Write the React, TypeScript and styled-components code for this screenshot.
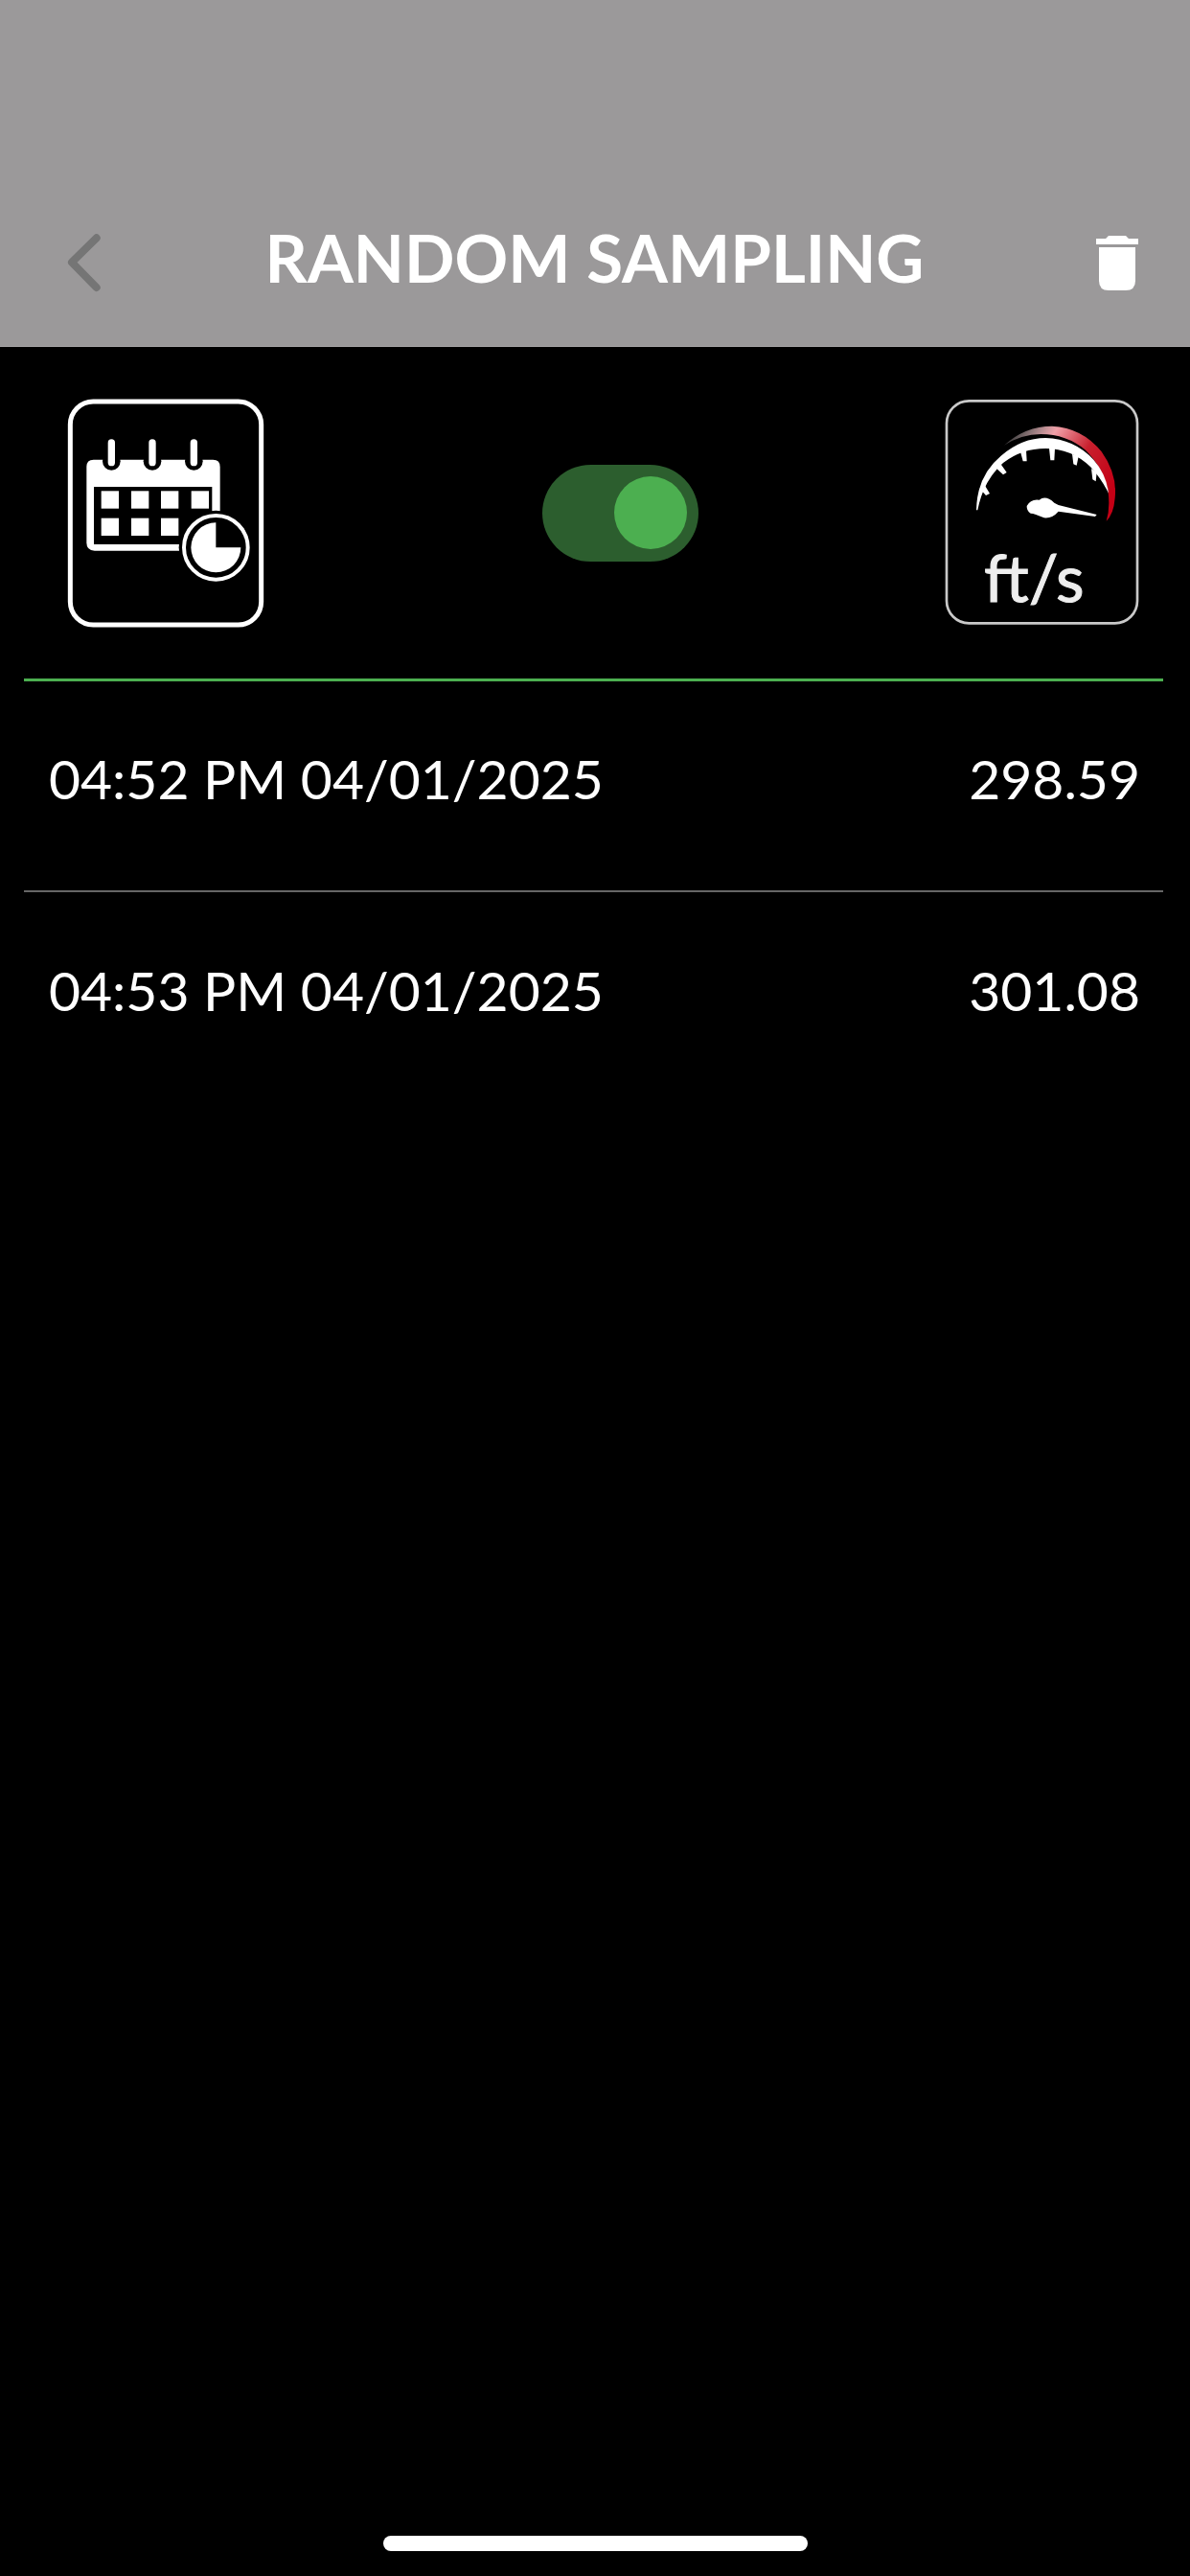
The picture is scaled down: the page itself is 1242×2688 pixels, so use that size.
import React from 'react'
import styled, { createGlobalStyle } from 'styled-components'

const GlobalStyle = createGlobalStyle`
  html, body {
    margin: 0;
    padding: 0;
    background: #000;
  }
  body {
    font-family: Lato, "Open Sans", sans-serif;
  }
`

const Page = styled.div`
  width: 1242px;
  height: 2688px;
  background: #000;
  display: flex;
  flex-direction: column;
  overflow: hidden;
`

const Header = styled.header`
  height: 362px;
  box-sizing: border-box;
  background: #9b999a;
  border-bottom: 1px solid #a8a6a7;
  display: flex;
  align-items: flex-end;
  justify-content: space-between;
  padding: 0 54px 56px 69px;
`

const BackIcon = styled.svg`
  width: 38px;
  height: 62px;
  display: block;
`

const TrashIcon = styled.svg`
  width: 44px;
  height: 57px;
  display: block;
  margin-bottom: 2px;
`

const Title = styled.h1`
  margin: 0 10px 5px 0;
  font-size: 69px;
  line-height: 62px;
  font-weight: 700;
  color: #fff;
  letter-spacing: 0;
  white-space: nowrap;
`

const Toolbar = styled.div`
  height: 346px;
  display: flex;
  align-items: center;
  padding: 0 49px 0 68px;
`

const CalendarIcon = styled.svg`
  width: 210px;
  height: 245px;
  display: block;
  filter: blur(0.5px);
`

const SpeedIcon = styled.svg`
  width: 210px;
  height: 245px;
  display: block;
  margin-left: auto;
  filter: blur(0.5px);
`

const Toggle = styled.div`
  margin-left: 288px;
  width: 163px;
  height: 101px;
  border-radius: 51px;
  background: #2c5e2e;
  display: flex;
  align-items: center;
  justify-content: flex-end;
  padding-right: 12px;
  box-sizing: border-box;
`

const Thumb = styled.div`
  width: 76px;
  height: 76px;
  border-radius: 50%;
  background: #4caf50;
`

const List = styled.div`
  margin: 0 28px 0 25px;
  border-top: 3px solid #4caf50;
`

const Row = styled.div<{ $divider?: boolean }>`
  height: 220px;
  display: flex;
  align-items: center;
  justify-content: space-between;
  padding: 0 24px 17px 26px;
  box-sizing: border-box;
  font-size: 57px;
  color: #fff;
  border-bottom: ${(p) => (p.$divider ? '2px solid #666' : 'none')};
`

const Spacer = styled.div`
  flex: 1;
`

const HomeBar = styled.div`
  width: 443px;
  height: 16px;
  border-radius: 8px;
  background: #fff;
  margin: 0 auto 26px;
`

const readings = [
  { time: '04:52 PM 04/01/2025', value: '298.59' },
  { time: '04:53 PM 04/01/2025', value: '301.08' },
]

const squares = [
  [168, 338],
  [262, 338],
  [355, 338],
  [450, 338],
  [168, 423],
  [262, 423],
  [355, 423],
]

const App = () => {
  return (
    <Page>
      <GlobalStyle />
      <Header>
        <BackIcon viewBox="0 0 38 62">
          <path d="M31.7 5.3 L6 30.7 L31.7 57" fill="none" stroke="#757575" strokeWidth="8" strokeLinecap="round" strokeLinejoin="round" />
        </BackIcon>
        <Title>RANDOM SAMPLING</Title>
        <TrashIcon viewBox="0 0 44 57">
          <path d="M10 3 L13 0 H31 L34 3 H44 V9 H0 V3 Z" fill="#fff" />
          <path d="M3 12 H41 V47 Q41 57 31 57 H13 Q3 57 3 47 Z" fill="#fff" />
        </TrashIcon>
      </Header>
      <Toolbar>
        <CalendarIcon viewBox="55 40 630 735">
          <rect x="71" y="58" width="598" height="699" rx="72" fill="none" stroke="#fff" strokeWidth="15" />
          <path d="M122 262 Q122 240 144 240 H518 Q540 240 540 262 V500 Q540 525 515 525 H147 Q122 525 122 500 Z" fill="#fff" />
          <rect x="145" y="325" width="370" height="180" fill="#000" />
          {squares.map(([x, y]) => (
            <rect key={`${x}-${y}`} x={x} y={y} width="55" height="55" fill="#fff" />
          ))}
          {[200, 328, 458].map((x) => (
            <g key={x}>
              <circle cx={x} cy="245" r="28" fill="#000" />
              <rect x={x - 16} y="170" width="32" height="94" rx="16" fill="#000" />
              <rect x={x - 11} y="176" width="22" height="84" rx="11" fill="#fff" />
            </g>
          ))}
          <circle cx="527" cy="515" r="116" fill="#000" />
          <circle cx="527" cy="515" r="100" fill="none" stroke="#fff" strokeWidth="12" />
          <path d="M527 515 V437 A78 78 0 1 0 605 515 Z" fill="#fff" />
        </CalendarIcon>
        <Toggle>
          <Thumb />
        </Toggle>
        <SpeedIcon viewBox="40 40 630 735">
          <rect x="55" y="56" width="597" height="696" rx="70" fill="none" stroke="#c9c9c9" strokeWidth="8" />
          <defs>
            <linearGradient id="redArc" x1="240" y1="150" x2="560" y2="350" gradientUnits="userSpaceOnUse">
              <stop offset="0" stopColor="#fff" stopOpacity="0.1" />
              <stop offset="0.35" stopColor="#f0a0a8" />
              <stop offset="0.65" stopColor="#c8202e" />
              <stop offset="1" stopColor="#c40015" />
            </linearGradient>
          </defs>
          <path d="M235 195 Q300 135 385 135 Q480 140 540 215 Q590 285 582 360 Q578 410 555 432 Q568 390 560 335 Q545 265 490 210 Q430 160 350 160 Q290 160 235 195 Z" fill="url(#redArc)" />
          <path d="M148 398 Q150 290 225 228 Q290 172 365 172 Q455 175 515 240 Q555 285 562 345 Q540 300 505 262 Q445 205 365 205 Q290 205 232 250 Q170 305 152 398 Z" fill="#fff" />
          <path d="M286 215 L304 210 L306 245 L294 245 Z M376 205 H394 L392 242 H380 Z M448 222 L468 230 L462 258 L452 254 Z M508 268 L525 280 L522 308 L512 302 Z M205 262 L222 250 L243 280 L232 287 Z M160 332 L172 316 L190 346 L178 352 Z" fill="#fff" />
          <path d="M306 385 Q318 362 345 366 Q365 350 392 375 L405 382 L525 412 L520 418 L405 402 Q385 425 360 422 Q330 408 318 408 Q305 400 306 385 Z" fill="#fff" />
          <text x="172" y="685" fontFamily="Lato, sans-serif" fontSize="205" fill="#eeeeee" stroke="#eeeeee" strokeWidth="3">ft/s</text>
        </SpeedIcon>
      </Toolbar>
      <List>
        {readings.map((r, i) => (
          <Row key={r.time} $divider={i === 0}>
            <span>{r.time}</span>
            <span>{r.value}</span>
          </Row>
        ))}
      </List>
      <Spacer />
      <HomeBar />
    </Page>
  )
}

export default App
